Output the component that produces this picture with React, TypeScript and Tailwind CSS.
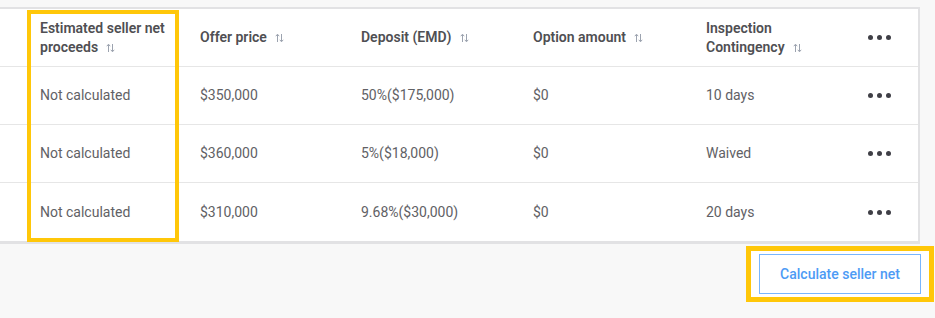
import React from 'react';

type Row = { net: string; price: string; deposit: string; option: string; inspection: string };

const rows: Row[] = [
  { net: 'Not calculated', price: '$350,000', deposit: '50%($175,000)', option: '$0', inspection: '10 days' },
  { net: 'Not calculated', price: '$360,000', deposit: '5%($18,000)', option: '$0', inspection: 'Waived' },
  { net: 'Not calculated', price: '$310,000', deposit: '9.68%($30,000)', option: '$0', inspection: '20 days' },
];

const cols = 'grid grid-cols-[200px_161px_172px_173px_149px_1fr]';

function SortIcon() {
  return (
    <svg width="9" height="10" viewBox="0 0 9 10" className="inline-block ml-2 align-[-1px]" fill="none" stroke="#9ca3af" strokeWidth="1">
      <path d="M2.5 9V1.5M0.8 3.2L2.5 1.2L4.2 3.2" />
      <path d="M6.5 1V8.5M4.8 6.8L6.5 8.8L8.2 6.8" />
    </svg>
  );
}

function Dots() {
  return (
    <div className="flex items-center gap-[4px] ml-[13px]">
      <span className="w-[5px] h-[5px] rounded-full bg-[#3f3f46]" />
      <span className="w-[5px] h-[5px] rounded-full bg-[#3f3f46]" />
      <span className="w-[5px] h-[5px] rounded-full bg-[#3f3f46]" />
    </div>
  );
}

export default function App() {
  return (
    <div className="w-[935px] h-[318px] bg-[#f8f8f8] pt-[7px] font-['Roboto',sans-serif] overflow-hidden">
      <div className="relative w-[920px] bg-white border-t-2 border-r-2 border-b-[3px] border-[#e2e2e4]">
        {/* header */}
        <div className={`${cols} h-[58px] items-center text-[14px] font-semibold text-[#4f4f53] leading-[19px] border-b border-[#e6e6e6]`}>
          <div className="pl-[40px] pr-2">Estimated seller net proceeds<SortIcon /></div>
          <div>Offer price<SortIcon /></div>
          <div>Deposit (EMD)<SortIcon /></div>
          <div>Option amount<SortIcon /></div>
          <div className="pr-4">Inspection Contingency<SortIcon /></div>
          <div className="flex"><Dots /></div>
        </div>

        {rows.map((r, i) => (
          <div
            key={i}
            className={`${cols} h-[58px] items-center text-[14px] text-[#616165] ${i < rows.length - 1 ? 'border-b border-[#e6e6e6]' : ''}`}
          >
            <div className="pl-[40px]">{r.net}</div>
            <div>{r.price}</div>
            <div>{r.deposit}</div>
            <div>{r.option}</div>
            <div>{r.inspection}</div>
            <div className="flex"><Dots /></div>
          </div>
        ))}

        {/* highlight around net proceeds column */}
        <div className="absolute left-[27px] top-[1px] w-[152px] h-[232px] border-[4px] border-[#ffc709] pointer-events-none" />
      </div>

      <div className="flex justify-end pr-[1px] mt-[2px]">
        <div className="border-[5px] border-[#ffc709] px-[8px] py-[3px] bg-white">
          <button className="w-[162px] h-[40px] border border-[#78b6ff] bg-white text-[14px] font-medium text-[#4d9bf5]">
            Calculate seller net
          </button>
        </div>
      </div>
    </div>
  );
}
